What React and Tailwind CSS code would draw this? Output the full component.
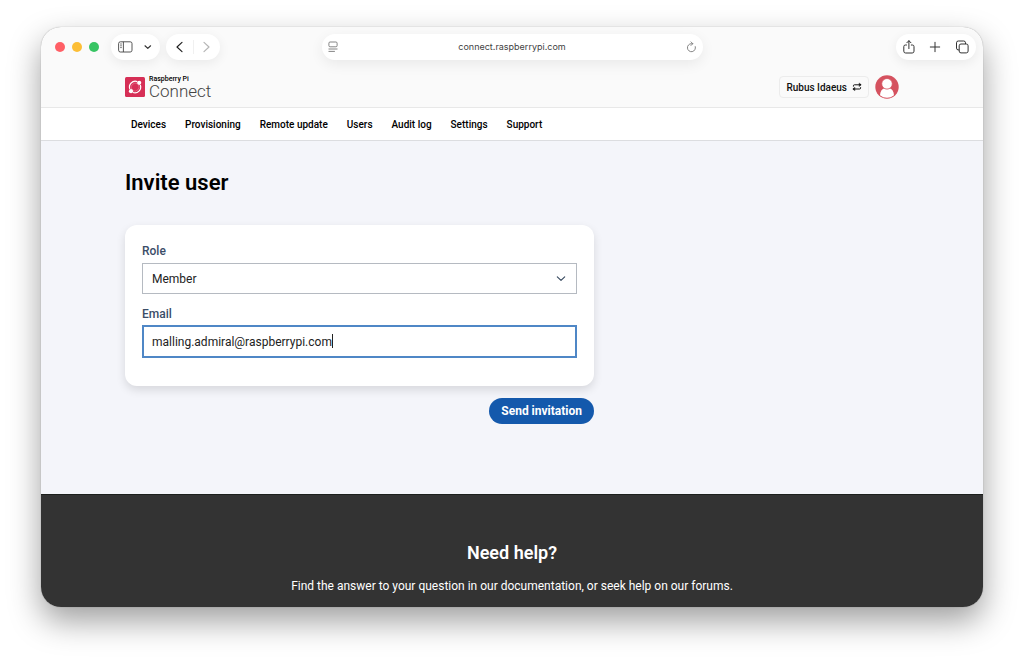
import React, { useState } from 'react';

const navLinks = ['Devices', 'Provisioning', 'Remote update', 'Users', 'Audit log', 'Settings', 'Support'];

const Toolbar = () => (
  <div className="flex h-10 items-center justify-between px-[7px]">
    <div className="flex flex-1 items-center">
      <div className="ml-[7px] flex gap-[7px]">
        <span className="size-2.5 rounded-full bg-[#ff5f66]" />
        <span className="size-2.5 rounded-full bg-[#fcbe36]" />
        <span className="size-2.5 rounded-full bg-[#37c463]" />
      </div>
      <div className="ml-3 flex h-[26px] w-[49px] items-center justify-between rounded-full bg-white px-[7px] shadow-[0_3px_12px_rgba(0,0,0,0.07)]">
        <button type="button" aria-label="Sidebar">
          <svg className="h-3 w-[15px]" viewBox="0 0 15 12" fill="none" stroke="#444" strokeWidth="0.9">
            <rect x="0.6" y="0.8" width="13.4" height="10.2" rx="1.8" />
            <path d="M5.4 0.8v10.2M2.3 3h1.4M2.3 4.8h1.4M2.3 6.6h1.4" />
          </svg>
        </button>
        <button type="button" aria-label="Tab groups">
          <svg className="h-3 w-2.5" viewBox="0 0 10 12" fill="none" stroke="#333" strokeWidth="1.2" strokeLinecap="round" strokeLinejoin="round">
            <path d="M2 4.800 4.800 7.400l2.800-2.600" />
          </svg>
        </button>
      </div>
      <div className="ml-1.5 flex h-[26px] w-[54px] items-center justify-between rounded-full bg-white px-[7px] shadow-[0_3px_12px_rgba(0,0,0,0.07)]">
        <button type="button" aria-label="Back">
          <svg className="h-3 w-3" viewBox="0 0 12 12" fill="none" stroke="#222" strokeWidth="1.2" strokeLinecap="round" strokeLinejoin="round">
            <path d="M9 1.4 4 6l5 4.6" />
          </svg>
        </button>
        <span className="h-3.5 w-px bg-[#f0f0f0]" />
        <button type="button" aria-label="Forward">
          <svg className="h-3 w-3" viewBox="0 0 12 12" fill="none" stroke="#b5b5b5" strokeWidth="1.2" strokeLinecap="round" strokeLinejoin="round">
            <path d="M3 1.4 8 6l-5 4.6" />
          </svg>
        </button>
      </div>
    </div>

    <div className="flex h-[26px] w-[381px] items-center justify-between rounded-full bg-white px-[5px] shadow-[0_4px_14px_rgba(0,0,0,0.07)]">
      <svg className="h-3 w-[11px]" viewBox="0 0 11 12" fill="none" stroke="#777" strokeWidth="0.9">
        <rect x="1.9" y="1" width="8.2" height="4.8" rx="1.2" />
        <path d="M1.5 8h9M1.5 10.4h6.4" />
      </svg>
      <span className="font-[Inter,sans-serif] text-[9px] text-[#3f3f3f]">connect.raspberrypi.com</span>
      <button type="button" aria-label="Reload">
        <svg className="h-3 w-[11px]" viewBox="0 0 11 12" fill="none" stroke="#777" strokeWidth="0.9" strokeLinecap="round" strokeLinejoin="round">
          <path d="M9.3 5.6a4 4 0 1 1-3.9-2.9h1.3M5 0.9l1.8 1.8-1.8 1.8" />
        </svg>
      </button>
    </div>

    <div className="flex flex-1 justify-end">
      <div className="flex h-[26px] w-20 items-center justify-between rounded-full bg-white px-1.5 shadow-[0_3px_12px_rgba(0,0,0,0.07)]">
        <button type="button" aria-label="Share">
          <svg className="h-3.5 w-3.5" viewBox="0 0 14 14" fill="none" stroke="#333" strokeWidth="1" strokeLinecap="round" strokeLinejoin="round">
            <path d="M4.5 5H3.4A1.6 1.6 0 0 0 1.8 6.6v4.6a1.8 1.8 0 0 0 1.8 1.8h6.6a1.8 1.8 0 0 0 1.8-1.8V6.6A1.6 1.6 0 0 0 10.4 5H9.3M6.9 8.6V0.8M4.8 2.8 6.9 0.7 9 2.8" />
          </svg>
        </button>
        <button type="button" aria-label="New tab">
          <svg className="h-3.5 w-3.5" viewBox="0 0 14 14" fill="none" stroke="#333" strokeWidth="1" strokeLinecap="round">
            <path d="M6 2.300v9.400M1.300 7h9.400" />
          </svg>
        </button>
        <button type="button" aria-label="Tabs">
          <svg className="h-3.5 w-3.5" viewBox="0 0 14 14" fill="none" stroke="#333" strokeWidth="1" strokeLinejoin="round">
            <rect x="3.2" y="4" width="8.9" height="8.9" rx="1.8" />
            <path d="M3.2 9.9H2.1A1.8 1.8 0 0 1 0.500 8.1V2.800A1.800 1.800 0 0 1 2.300 1h5.400a1.800 1.800 0 0 1 1.800 1.800V4" />
          </svg>
        </button>
      </div>
    </div>
  </div>
);

const Logo = () => (
  <a href="#" className="flex items-center gap-1">
    <svg className="size-5" viewBox="0 0 20 20" fill="none">
      <rect width="20" height="20" rx="1.5" fill="#d62f56" />
      <path d="M4.800 12A5.800 5.800 0 0 1 12.200 4.600M15.300 8A5.800 5.800 0 0 1 7.900 15.500" stroke="#fff" strokeWidth="1.200" />
      <path d="M6.800 12.600a4.200 4.200 0 0 1 5.800-5.800M13.400 7.600a4.200 4.200 0 0 1-5.800 5.800" stroke="#ee7f98" strokeWidth="0.600" />
      <circle cx="14.200" cy="5.800" r="2.100" fill="#fff" />
      <circle cx="6" cy="14.200" r="2.100" fill="#fff" />
    </svg>
    <span className="flex flex-col">
      <span className="text-[7px] leading-2 font-medium text-black">Raspberry Pi</span>
      <span className="text-[17px] leading-4 font-light text-[#444]">Connect</span>
    </span>
  </a>
);

const Header = () => (
  <header className="border-b border-[#e8e8e8] px-5">
    <div className="mx-auto flex h-10 max-w-[774px] items-center justify-between">
      <Logo />
      <div className="flex items-center gap-1.5">
        <button type="button" className="flex h-[22px] items-center gap-[5px] rounded border border-[#ececec] px-1.5 text-[10px] font-medium text-[#111]">
          Rubus Idaeus
          <svg className="size-2.5" viewBox="0 0 10 10" fill="none" stroke="#111" strokeWidth="1" strokeLinecap="round" strokeLinejoin="round">
            <path d="M1.400 4.200V3.800a1 1 0 0 1 1-1H8.500M8.600 5.600v0.400a1 1 0 0 1-1 1H1.500" />
            <path d="M7.300 1.100 9.300 2.800 7.300 4.500zM2.700 5.300 0.700 7l2 1.700z" fill="#111" strokeWidth="0.300" />
          </svg>
        </button>
        <a href="#" aria-label="Account">
          <svg className="size-6" viewBox="0 0 24 24">
            <circle cx="12" cy="12" r="11.7" fill="#d5525f" />
            <path d="M5 20.3c0.300-4.100 2-6.400 4.500-7.100h5c2.500 0.700 4.200 3 4.500 7.100a11 11 0 0 1-14 0z" fill="#fff" />
            <circle cx="12" cy="8.800" r="5.300" fill="#fff" stroke="#d5525f" strokeWidth="0.8" />
          </svg>
        </a>
      </div>
    </div>
  </header>
);

const InviteForm = () => {
  const [role, setRole] = useState('Member');
  const [email, setEmail] = useState('malling.admiral@raspberrypi.com');

  return (
    <form onSubmit={(e) => e.preventDefault()} className="flex max-w-[469px] flex-col">
      <div className="rounded-xl bg-white px-[17px] pt-[18px] pb-7 shadow-[0_4px_10px_rgba(0,0,0,0.12)]">
        <label htmlFor="role" className="block text-xs leading-4 font-medium text-[#3b4d68]">Role</label>
        <div className="relative mt-1">
          <select
            id="role"
            value={role}
            onChange={(e) => setRole(e.target.value)}
            className="block h-[31px] w-full appearance-none border border-[#b5bac1] bg-white px-[9px] text-xs text-[#222]"
          >
            <option>Member</option>
            <option>Admin</option>
          </select>
          <svg className="pointer-events-none absolute top-2.5 right-2.5 size-3" viewBox="0 0 12 12" fill="none" stroke="#34465c" strokeWidth="1.1" strokeLinecap="round" strokeLinejoin="round">
            <path d="M2.300 3.800 6 7.400l3.700-3.600" />
          </svg>
        </div>
        <label htmlFor="email" className="mt-3 block text-xs leading-4 font-medium text-[#3b4d68]">Email</label>
        <div className="relative mt-[3px]">
          <input
            id="email"
            type="email"
            value={email}
            onChange={(e) => setEmail(e.target.value)}
            className="block h-[33px] w-full border-2 border-[#4f87c6] bg-white px-2 text-xs text-[#222] caret-transparent outline-none"
          />
          <span className="pointer-events-none absolute top-[9px] left-[190px] h-3.5 w-px bg-[#222]" />
        </div>
      </div>
      <button type="submit" className="mt-3 h-[26px] self-end rounded-full bg-[#1459ac] px-3 text-xs font-bold text-white">
        Send invitation
      </button>
    </form>
  );
};

const App = () => {
  return (
    <div className="flex h-screen flex-col bg-white px-[41px] pt-[27px] pb-[55px] font-[Roboto,sans-serif]">
      <div className="flex min-h-0 flex-1 flex-col overflow-hidden rounded-[20px] bg-[#fafafa] shadow-[0_0_1px_rgba(0,0,0,0.4),0_14px_32px_rgba(0,0,0,0.38)]">
        <Toolbar />
        <Header />
        <nav className="border-b border-[#dcdde0] bg-white px-5">
          <div className="mx-auto flex h-8 max-w-[774px] items-center gap-[19px] px-1.5 text-[10px] font-medium text-black">
            {navLinks.map((link) => (
              <a key={link} href="#">{link}</a>
            ))}
          </div>
        </nav>
        <main className="flex-1 bg-[#f4f5fa] px-5">
          <div className="mx-auto max-w-[774px] pt-7">
            <h1 className="mb-7 text-[22px] leading-7 font-semibold text-black">Invite user</h1>
            <InviteForm />
          </div>
        </main>
        <footer className="h-[113px] border-t border-[#1c1f1c] bg-[#333] px-5 pt-[46px] text-center text-white">
          <h2 className="text-lg leading-6 font-semibold">Need help?</h2>
          <p className="mt-[13px] text-xs leading-4">
            Find the answer to your question in our documentation, or seek help on our forums.
          </p>
        </footer>
      </div>
    </div>
  );
};

export default App;
